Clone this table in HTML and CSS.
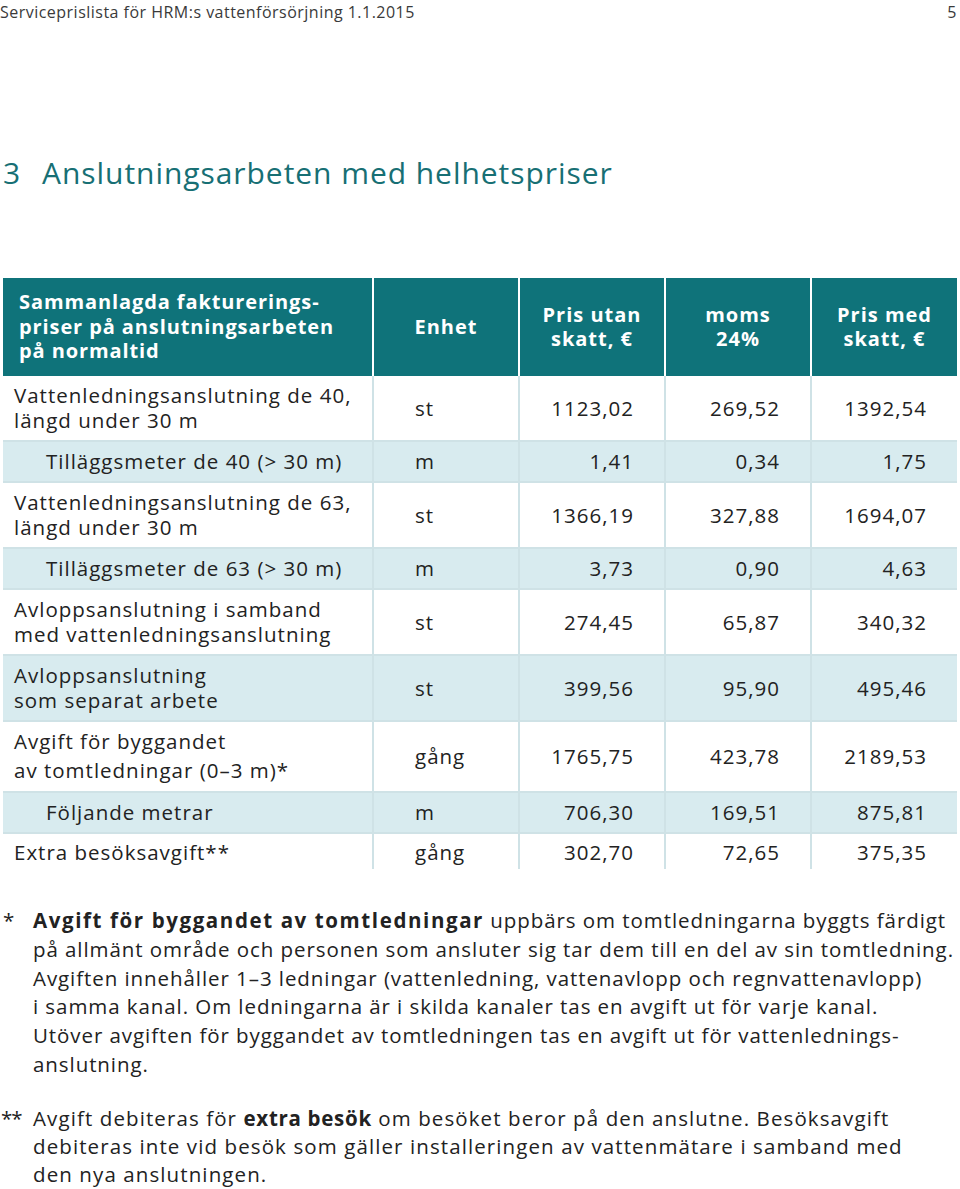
FILE: index.html
```html
<!DOCTYPE html>
<html lang="sv">
<head>
<meta charset="utf-8">
<title>Serviceprislista</title>
<link rel="stylesheet" href="styles.css">
</head>
<body>
<div class="page">
  <header class="running">
    <span>Serviceprislista för HRM:s vattenförsörjning 1.1.2015</span>
    <span>5</span>
  </header>

  <h1 class="title"><span class="num">3</span>Anslutningsarbeten med helhetspriser</h1>

  <table class="prices">
    <colgroup>
      <col class="c-desc"><col class="c-unit"><col class="c-num"><col class="c-num"><col class="c-num">
    </colgroup>
    <thead>
      <tr>
        <th class="desc">Sammanlagda fakturerings-<br>priser på anslutningsarbeten<br>på normaltid</th>
        <th>Enhet</th>
        <th>Pris utan<br>skatt, €</th>
        <th>moms<br>24%</th>
        <th>Pris med<br>skatt, €</th>
      </tr>
    </thead>
    <tbody>
      <tr>
        <td class="desc">Vattenledningsanslutning de 40,<br>längd under 30 m</td>
        <td class="unit">st</td><td class="num">1123,02</td><td class="num">269,52</td><td class="num">1392,54</td>
      </tr>
      <tr class="alt">
        <td class="desc sub">Tilläggsmeter de 40 (&gt; 30 m)</td>
        <td class="unit">m</td><td class="num">1,41</td><td class="num">0,34</td><td class="num">1,75</td>
      </tr>
      <tr>
        <td class="desc">Vattenledningsanslutning de 63,<br>längd under 30 m</td>
        <td class="unit">st</td><td class="num">1366,19</td><td class="num">327,88</td><td class="num">1694,07</td>
      </tr>
      <tr class="alt">
        <td class="desc sub">Tilläggsmeter de 63 (&gt; 30 m)</td>
        <td class="unit">m</td><td class="num">3,73</td><td class="num">0,90</td><td class="num">4,63</td>
      </tr>
      <tr>
        <td class="desc">Avloppsanslutning i samband<br>med vattenledningsanslutning</td>
        <td class="unit">st</td><td class="num">274,45</td><td class="num">65,87</td><td class="num">340,32</td>
      </tr>
      <tr class="alt">
        <td class="desc">Avloppsanslutning<br>som separat arbete</td>
        <td class="unit">st</td><td class="num">399,56</td><td class="num">95,90</td><td class="num">495,46</td>
      </tr>
      <tr class="tall">
        <td class="desc">Avgift för byggandet<br>av tomtledningar (0–3 m)*</td>
        <td class="unit">gång</td><td class="num">1765,75</td><td class="num">423,78</td><td class="num">2189,53</td>
      </tr>
      <tr class="alt">
        <td class="desc sub">Följande metrar</td>
        <td class="unit">m</td><td class="num">706,30</td><td class="num">169,51</td><td class="num">875,81</td>
      </tr>
      <tr class="last">
        <td class="desc">Extra besöksavgift**</td>
        <td class="unit">gång</td><td class="num">302,70</td><td class="num">72,65</td><td class="num">375,35</td>
      </tr>
    </tbody>
  </table>

  <div class="notes">
    <div class="note note-1">
      <span class="mark">*</span>
      <p><b>Avgift för byggandet av tomtledningar</b> uppbärs om tomtledningarna byggts färdigt<br>på allmänt område och personen som ansluter sig tar dem till en del av sin tomtledning.<br>Avgiften innehåller 1–3 ledningar (vattenledning, vattenavlopp och regnvattenavlopp)<br>i samma kanal. Om ledningarna är i skilda kanaler tas en avgift ut för varje kanal.<br>Utöver avgiften för byggandet av tomtledningen tas en avgift ut för vattenlednings-<br>anslutning.</p>
    </div>
    <div class="note note-2">
      <span class="mark">**</span>
      <p>Avgift debiteras för <b>extra besök</b> om besöket beror på den anslutne. Besöksavgift<br>debiteras inte vid besök som gäller installeringen av vattenmätare i samband med<br>den nya anslutningen.</p>
    </div>
  </div>
</div>
</body>
</html>
```

FILE: styles.css
```css
html, body {
  margin: 0;
  padding: 0;
  background: #ffffff;
}

body {
  font-family: "Open Sans", "Noto Sans", sans-serif;
  color: #222222;
}

.page {
  width: 960px;
}

.running {
  display: flex;
  justify-content: space-between;
  height: 24px;
  line-height: 24px;
  font-size: 16px;
  color: #3a3a3a;
  padding: 0 3px 0 0;
  letter-spacing: 0.48px;
}

.title {
  margin: 131px 0 0 3px;
  height: 36px;
  font-size: 30px;
  line-height: 36px;
  font-weight: 400;
  color: #176f74;
  letter-spacing: 0.95px;
}

.title .num {
  display: inline-block;
  width: 39px;
}

.prices {
  margin: 87px 0 0 3px;
  width: 954px;
  border-collapse: collapse;
  table-layout: fixed;
  font-size: 20.5px;
  letter-spacing: 1px;
}

.c-desc { width: 370px; }
.c-unit { width: 146px; }
.c-num { width: 146px; }

.prices th {
  background: #0f737a;
  color: #ffffff;
  font-weight: 700;
  font-size: 20px;
  line-height: 24.5px;
  height: 98px;
  padding: 0;
  text-align: center;
  vertical-align: middle;
  border-left: 2px solid #ffffff;
  box-sizing: border-box;
}

.prices th:first-child {
  border-left: none;
}

.prices th.desc {
  text-align: left;
  padding: 0 0 0 16px;
  letter-spacing: 0.9px;
}

.prices td {
  line-height: 25px;
  padding-top: 7px;
  padding-bottom: 7px;
  padding-left: 0;
  padding-right: 0;
  vertical-align: middle;
  border-top: 2px solid #cfe2e6;
  border-left: 2px solid #cfe2e6;
  white-space: nowrap;
}

.prices tbody tr:first-child td {
  border-top: none;
}

.prices td:first-child {
  border-left: none;
}

.prices tr.alt td {
  background: #d8ebef;
}

.prices tr.tall td {
  padding-top: 5px;
  padding-bottom: 6px;
}

.prices tr.tall td.desc {
  line-height: 29px;
}

.prices tr.last td {
  padding-top: 6px;
  padding-bottom: 4px;
}

.prices td.desc {
  padding-left: 11px;
}

.prices td.desc.sub {
  padding-left: 43px;
}

.prices td.unit {
  padding-left: 41px;
}

.prices td.num {
  text-align: right;
  padding-right: 30px;
}

.notes {
  margin-top: 37px;
  font-size: 20.5px;
  letter-spacing: 0.93px;
  color: #222222;
}

.note {
  display: flex;
}

.note p {
  margin: 0;
  white-space: nowrap;
}

.note b {
  font-weight: 700;
}

.note-1 b {
  letter-spacing: 1.6px;
}

.note-1 {
  line-height: 28.8px;
}

.note-1 .mark {
  width: 30px;
  padding-left: 3px;
  flex: none;
}

.note-2 {
  margin-top: 25px;
  line-height: 28px;
  letter-spacing: 1.1px;
}

.note-2 b {
  letter-spacing: 0.7px;
}

.note-2 .mark {
  width: 32px;
  padding-left: 1px;
  flex: none;
  letter-spacing: -1px;
}
```
